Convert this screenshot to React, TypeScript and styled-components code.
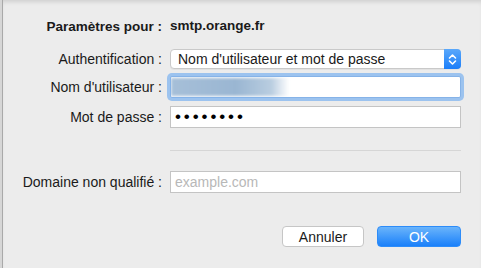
import styled, { createGlobalStyle } from "styled-components";

const GlobalStyle = createGlobalStyle`
  html, body {
    margin: 0;
    padding: 0;
    background: #ececec;
  }

  body {
    font-family: "Liberation Sans", Arial, sans-serif;
    font-size: 14px;
    color: #1a1a1a;
  }
`;

const Window = styled.div`
  display: flex;
  flex-direction: row;
  width: 481px;
  height: 268px;
  overflow: hidden;
`;

const BehindStrip = styled.div`
  width: 2px;
  background: #d6d6d6;
  border-right: 1px solid #a9a9a9;
`;

const Sheet = styled.div`
  flex-grow: 1;
  display: flex;
  flex-direction: column;
  padding-top: 17px;

  background: #ececec;
  box-shadow: inset 0 4px 4px -2px rgba(0, 0, 0, 0.12);
`;

const Row = styled.div<{ $top: number }>`
  display: grid;
  grid-template-columns: 159px 291px;
  column-gap: 8px;
  align-items: center;

  margin-top: ${(p) => p.$top}px;
`;

const Label = styled.div<{ $bold?: boolean }>`
  text-align: right;
  white-space: nowrap;
  font-weight: ${(p) => (p.$bold ? 700 : 400)};
  font-size: ${(p) => (p.$bold ? "13.5px" : "14px")};
`;

const Value = styled.div`
  font-weight: 700;
  font-size: 13.5px;
  line-height: 18px;
`;

const Popup = styled.div`
  position: relative;
  display: flex;
  align-items: center;
  height: 20px;
  box-sizing: border-box;

  padding-left: 7px;

  background: #ffffff;
  border: 1px solid #c9c9c9;
  border-radius: 4px;
  box-shadow: 0 1px 0 rgba(0, 0, 0, 0.04);
`;

const Stepper = styled.div`
  position: absolute;
  top: -1px;
  right: -1px;
  bottom: -1px;
  width: 17px;

  display: flex;
  align-items: center;
  justify-content: center;

  background: linear-gradient(#5aa8fb, #1b7ef9);
  border-radius: 0 4px 4px 0;
`;

const Field = styled.div<{ $focused?: boolean }>`
  position: relative;
  display: flex;
  align-items: center;
  height: 22px;
  box-sizing: border-box;

  padding-left: 4px;
  overflow: hidden;

  background: #ffffff;
  border: 1px solid ${(p) => (p.$focused ? "#86b3e8" : "#c4c4c4")};
  box-shadow: ${(p) => (p.$focused ? "0 0 0 3px #9cc3ef" : "none")};
  border-radius: ${(p) => (p.$focused ? "2px" : "0")};
`;

const Blurred = styled.div`
  width: 118px;
  height: 18px;
  margin-left: -4px;

  background: linear-gradient(90deg, #a6bfd8 0%, #9ab6d2 55%, #b9cde0 85%, #ffffff 100%);
  filter: blur(1.5px);
`;

const Dots = styled.span`
  font-size: 17px;
  letter-spacing: 2.9px;
  line-height: 20px;
  color: #000000;
`;

const Placeholder = styled.span`
  color: #b8b8b8;
`;

const Separator = styled.div`
  height: 1px;
  background: #d6d6d6;
`;

const Buttons = styled.div`
  display: flex;
  justify-content: flex-end;
  gap: 13px;

  width: 458px;
  margin-top: 33px;
`;

const Button = styled.div<{ $primary?: boolean }>`
  display: flex;
  align-items: center;
  justify-content: center;
  width: ${(p) => (p.$primary ? 84 : 82)}px;
  height: 21px;
  box-sizing: border-box;

  border-radius: 4px;
  border: 1px solid ${(p) => (p.$primary ? "#2d8cf9" : "#c6c6c6")};
  background: ${(p) =>
    p.$primary ? "linear-gradient(#6ab4fb, #1a80fa)" : "#ffffff"};
  color: ${(p) => (p.$primary ? "#ffffff" : "#1a1a1a")};
  font-size: 14px;
`;

const App = () => {
  return (
    <>
      <GlobalStyle />
      <Window>
        <BehindStrip />
        <Sheet>
          <Row $top={0}>
            <Label $bold>Paramètres pour :</Label>
            <Value>smtp.orange.fr</Value>
          </Row>
          <Row $top={14}>
            <Label>Authentification :</Label>
            <Popup>
              Nom d'utilisateur et mot de passe
              <Stepper>
                <svg width="9" height="13" viewBox="0 0 9 13">
                  <path
                    d="M1.5 5 L4.5 2 L7.5 5 M1.5 8 L4.5 11 L7.5 8"
                    fill="none"
                    stroke="#ffffff"
                    strokeWidth="1.6"
                    strokeLinecap="round"
                    strokeLinejoin="round"
                  />
                </svg>
              </Stepper>
            </Popup>
          </Row>
          <Row $top={7}>
            <Label>Nom d'utilisateur :</Label>
            <Field $focused>
              <Blurred />
            </Field>
          </Row>
          <Row $top={8}>
            <Label>Mot de passe :</Label>
            <Field>
              <Dots>••••••••</Dots>
            </Field>
          </Row>
          <Row $top={22}>
            <div />
            <Separator />
          </Row>
          <Row $top={20}>
            <Label>Domaine non qualifié :</Label>
            <Field>
              <Placeholder>example.com</Placeholder>
            </Field>
          </Row>
          <Buttons>
            <Button>Annuler</Button>
            <Button $primary>OK</Button>
          </Buttons>
        </Sheet>
      </Window>
    </>
  );
};

export default App;
